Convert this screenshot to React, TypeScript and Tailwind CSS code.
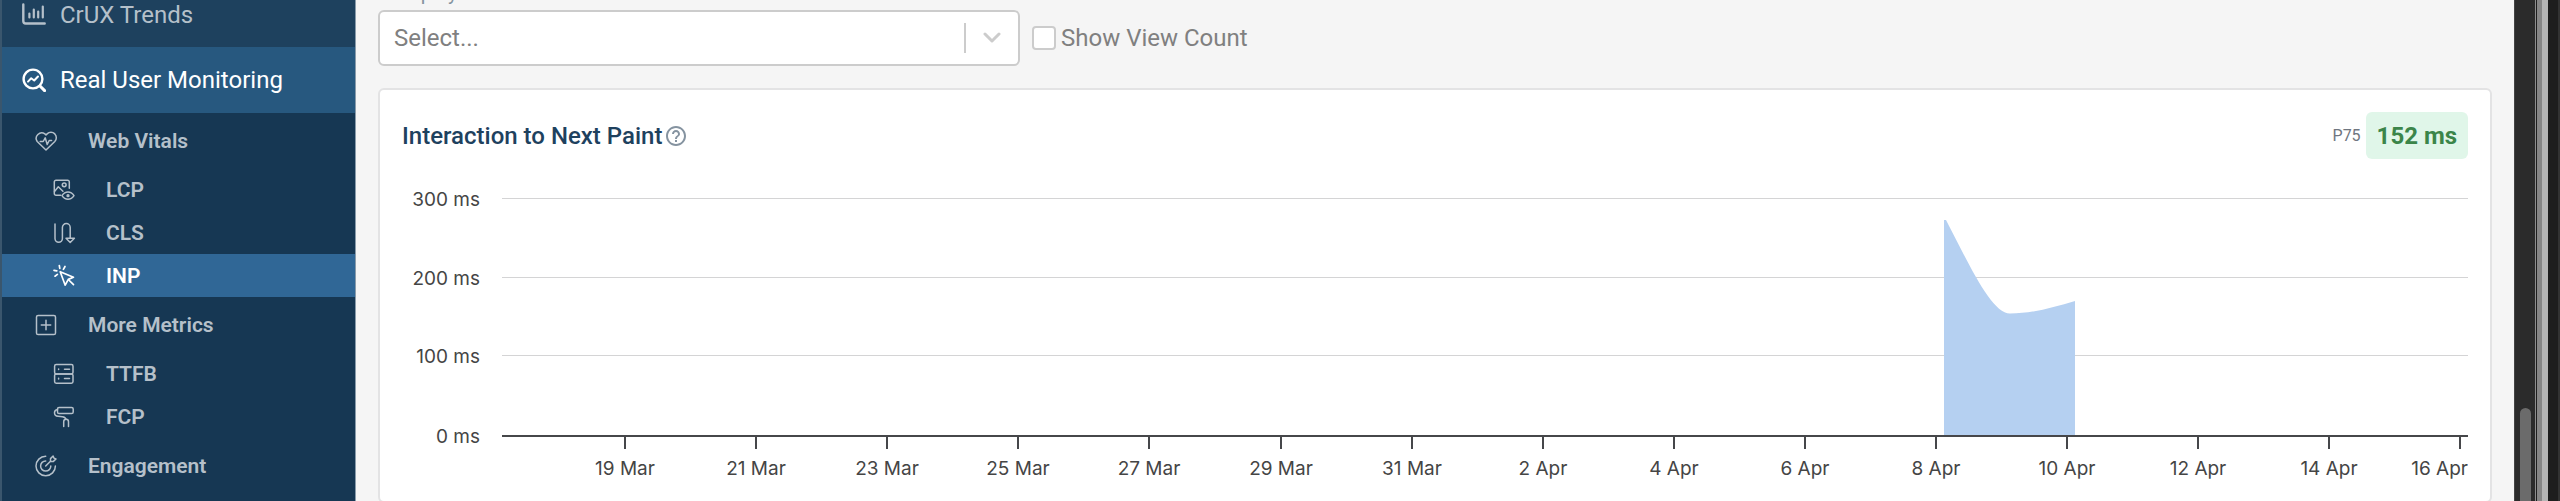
import { ReactNode } from "react";

interface IIconProps {
    children: ReactNode
    width?: number
}

const Icon = ({ children, width = 1.5 }: IIconProps) => (
    <svg
        className="h-6 w-6 shrink-0"
        viewBox="0 0 24 24"
        fill="none"
        stroke="currentColor"
        strokeWidth={width}
        strokeLinecap="round"
        strokeLinejoin="round"
        aria-hidden="true"
    >
        {children}
    </svg>
)

const TrendsIcon = () => (
    <Icon width={2.4}>
        <path d="M1.3 1.5v16.6a2.4 2.4 0 0 0 2.4 2.4h19" />
        <path d="M7.4 10.5v4M11.8 6.5v8M16.2 8.5v6M20.8 3.5v11" strokeWidth="2.2" />
    </Icon>
)

const MonitoringIcon = () => (
    <Icon width={2.4}>
        <circle cx="11" cy="11" r="9.4" />
        <path d="M18 18l4.6 4.6" strokeWidth="3" />
        <path d="M6 13.6l3.2-3.3 3 2.2 3.8-4" strokeWidth="2" />
    </Icon>
)

const HeartIcon = () => (
    <Icon>
        <path d="M20.8 4.9a5.5 5.5 0 0 0-7.7 0L12 6l-1.1-1.1a5.5 5.5 0 0 0-7.7 7.6L12 21l8.8-8.5a5.5 5.5 0 0 0 0-7.6z" />
        <path d="M6.2 12.5h3l2-3.7 2 6.7 2-4h2.4" />
    </Icon>
)

const ImageEyeIcon = () => (
    <Icon>
        <path d="M8.7 17.3H4a1.7 1.7 0 0 1-1.7-1.7V4A1.7 1.7 0 0 1 4 2.3h11.6A1.7 1.7 0 0 1 17.3 4v6.3" />
        <circle cx="12.2" cy="6.8" r="1.9" />
        <path d="M2.5 13.4l3.8-4.6 4.6 4.4" />
        <path d="M10 17.7c1.6-2.4 3.6-3.6 6-3.6s4.4 1.2 6 3.6c-1.6 2.4-3.6 3.6-6 3.6s-4.4-1.2-6-3.6z" />
        <circle cx="16" cy="17.7" r="0.9" />
    </Icon>
)

const ShiftIcon = () => (
    <Icon>
        <path d="M3 3v14.5a3.6 3.6 0 0 0 7.4 0V6.5a3.9 3.9 0 0 1 7.8 0V17" />
        <path d="M14 17.3h8.4l-4.2 4.2z" />
    </Icon>
)

const ClickIcon = () => (
    <Icon width={1.7}>
        <path d="M8.2 7.7l13.3 5.5-5.2 2.2-3.1 5.8z" />
        <path d="M16.8 16l4.7 4.7M7.3 1.5l.5 2.8M13 2.5l-1.6 2.8M2 6.3l2.8.6M3 12.2l2.4-1.8" />
    </Icon>
)

const PlusBoxIcon = () => (
    <Icon>
        <rect x="2.5" y="2.5" width="19" height="19" rx="1.6" />
        <path d="M12 7.3v9.4M7.3 12h9.4" />
    </Icon>
)

const ServerIcon = () => (
    <Icon>
        <rect x="2.6" y="2.6" width="18.4" height="9.3" rx="1.6" />
        <rect x="2.6" y="11.9" width="18.4" height="9.3" rx="1.6" />
        <path d="M6.6 6.9v.7M6.6 16.2v.7M12.5 7.2h5M12.5 16.5h5" />
    </Icon>
)

const RollerIcon = () => (
    <Icon>
        <rect x="5.5" y="2.5" width="15.7" height="6" rx="1.6" />
        <path d="M5.5 4.5C3.5 4.9 2.5 6 2.5 7.7c0 2.2 1.3 3.4 3.6 3.6l4.3.4c2 .2 3.2 1 3.6 2.6" />
        <path d="M11.7 21.5v-4.8a2.4 2.4 0 0 1 4.8 0v4.8" />
    </Icon>
)

const TargetIcon = () => (
    <Icon>
        <path d="M11.7 2.3a9.7 9.7 0 1 0 9.7 9.7" />
        <path d="M11.7 6.9a5.1 5.1 0 1 0 5.1 5.1" />
        <path d="M11.7 12l5-5M16.5 7.2V4.6l2.6-2.6.8 2.1 2.1.8-2.6 2.5z" />
    </Icon>
)

const ChevronIcon = () => (
    <svg
        className="pointer-events-none absolute right-[19px] h-[12px] w-[18px]"
        viewBox="0 0 18 12"
        fill="none"
        stroke="#cccccc"
        strokeWidth="3"
        strokeLinecap="round"
        strokeLinejoin="round"
        aria-hidden="true"
    >
        <path d="M2 2l7 7 7-7" />
    </svg>
)

interface IMetric {
    label: string
    icon: ReactNode
    active?: boolean
}

interface IGroup {
    label: string
    icon: ReactNode
    metrics: IMetric[]
}

const groups: IGroup[] = [
    {
        label: "Web Vitals",
        icon: <HeartIcon />,
        metrics: [
            { label: "LCP", icon: <ImageEyeIcon /> },
            { label: "CLS", icon: <ShiftIcon /> },
            { label: "INP", icon: <ClickIcon />, active: true },
        ],
    },
    {
        label: "More Metrics",
        icon: <PlusBoxIcon />,
        metrics: [
            { label: "TTFB", icon: <ServerIcon /> },
            { label: "FCP", icon: <RollerIcon /> },
        ],
    },
    { label: "Engagement", icon: <TargetIcon />, metrics: [] },
]

const Sidebar = () => {
    return (
        <nav className="w-[356px] shrink-0 overflow-hidden border-r border-l-2 border-r-[#8a9cab] border-l-[#3a566d] bg-[#163753] text-[#b5c0ca]">
            <a href="#crux" className="-mt-[18px] flex h-[65px] items-center gap-[14px] bg-[#1e415e] px-5 text-2xl leading-7">
                <TrendsIcon />
                CrUX Trends
            </a>
            <a href="#rum" className="flex h-[66px] items-center gap-[14px] bg-[#27587f] px-5 text-2xl leading-7 text-white">
                <MonitoringIcon />
                Real User Monitoring
            </a>
            {
                groups.map((group) => (
                    <div key={group.label}>
                        <a href="#group" className="flex h-[55px] items-center gap-[30px] pl-8 text-[21px] leading-7 font-semibold">
                            {group.icon}
                            {group.label}
                        </a>
                        {
                            group.metrics.map((metric) => (
                                <a
                                    key={metric.label}
                                    href="#metric"
                                    className={
                                        metric.active
                                            ? "flex h-[43px] items-center gap-[30px] bg-[#306796] pl-[50px] text-[21px] leading-7 font-semibold text-white"
                                            : "flex h-[43px] items-center gap-[30px] pl-[50px] text-[21px] leading-7 font-semibold"
                                    }
                                >
                                    {metric.icon}
                                    {metric.label}
                                </a>
                            ))
                        }
                    </div>
                ))
            }
        </nav>
    )
}

const yTicks = [
    { label: "300 ms", y: 39 },
    { label: "200 ms", y: 118 },
    { label: "100 ms", y: 196 },
]

const xTicks = [
    "19 Mar", "21 Mar", "23 Mar", "25 Mar", "27 Mar", "29 Mar", "31 Mar",
    "2 Apr", "4 Apr", "6 Apr", "8 Apr", "10 Apr", "12 Apr", "14 Apr", "16 Apr",
]

const Chart = () => {
    return (
        <svg
            className="block w-full font-['Inter',sans-serif] text-[19px]"
            viewBox="0 0 2066 320"
            role="img"
            aria-label="Interaction to Next Paint over time"
        >
            {
                yTicks.map((tick) => (
                    <g key={tick.label}>
                        <path d={`M100 ${tick.y}.5H2066`} stroke="#d4d4d5" />
                        <text x="78" y={tick.y + 8} textAnchor="end" fill="#454545">{tick.label}</text>
                    </g>
                ))
            }
            <text x="78" y="284" textAnchor="end" fill="#454545">0 ms</text>
            <path d="M1542 277V61h2c22 42 45 93.5 64 93.5 22 0 43-6 65-12.5V277z" fill="#b5d0f1" />
            <path d="M100 277H2066" stroke="#46474a" strokeWidth="2" />
            {
                xTicks.map((label, index) => {
                    const x = Math.round(223 + index * 131.1)
                    const last = index === xTicks.length - 1
                    return (
                        <g key={label}>
                            <path d={`M${x} 276V290`} stroke="#46474a" strokeWidth="2" />
                            <text x={last ? 2066 : x} y="316" textAnchor={last ? "end" : "middle"} fill="#454545">
                                {label}
                            </text>
                        </g>
                    )
                })
            }
        </svg>
    )
}

const Filters = () => {
    return (
        <div className="-mt-[19px]">
            <label htmlFor="group-by" className="block h-[29px] text-xl leading-6 text-[#8593a0]">Group by</label>
            <div className="flex items-center gap-3">
                <div className="relative flex h-14 w-[642px] items-center">
                    <select
                        id="group-by"
                        className="h-full w-full appearance-none rounded-md border-2 border-[#cccccc] bg-white px-[14px] text-2xl text-[#808080]"
                    >
                        <option>Select...</option>
                    </select>
                    <span className="pointer-events-none absolute right-[54px] h-[30px] w-[2px] bg-[#cccccc]" />
                    <ChevronIcon />
                </div>
                <label className="flex items-center gap-[5px] text-2xl text-[#808080]">
                    <input type="checkbox" className="h-6 w-6 appearance-none rounded border-2 border-[#cccccc] bg-white" />
                    Show View Count
                </label>
            </div>
        </div>
    )
}

const MetricCard = () => {
    return (
        <section className="mt-[22px] rounded-md border-2 border-[#e3e3e4] bg-white p-[22px]">
            <header className="flex h-[47px] items-center justify-between">
                <div className="flex items-center gap-[2px]">
                    <h2 className="text-2xl font-medium text-[#1e415e]">Interaction to Next Paint</h2>
                    <button type="button" aria-label="Help" className="text-[#8593a0]">
                        <svg className="h-6 w-6" viewBox="0 0 24 24" fill="currentColor" aria-hidden="true">
                            <path d="M11 18h2v-2h-2v2zm1-16C6.48 2 2 6.48 2 12s4.48 10 10 10 10-4.48 10-10S17.52 2 12 2zm0 18c-4.41 0-8-3.59-8-8s3.59-8 8-8 8 3.59 8 8-3.59 8-8 8zm0-14c-2.21 0-4 1.79-4 4h2c0-1.1.9-2 2-2s2 .9 2 2c0 2-3 1.75-3 5h2c0-2.25 3-2.5 3-5 0-2.21-1.79-4-4-4z" />
                        </svg>
                    </button>
                </div>
                <div className="flex items-center gap-[5px]">
                    <span className="text-base text-[#6f7680]">P75</span>
                    <span className="flex h-[47px] items-center rounded-md bg-[#e0f6e9] px-[11px] text-2xl font-bold text-[#3b8549]">152 ms</span>
                </div>
            </header>
            <Chart />
        </section>
    )
}

const WindowEdge = () => {
    return (
        <div className="flex w-[46px] shrink-0">
            <div className="flex w-[21px] flex-col items-center border-l border-[#444444] bg-[#2b2b2b] pt-[408px]">
                <div className="w-[11px] grow rounded-t-full bg-[#6b6b6b]" />
            </div>
            <div className="w-px bg-[#8c8c8c]" />
            <div className="w-px bg-[#1e1e1e]" />
            <div className="w-[5px] bg-[#868686]" />
            <div className="w-[6px] bg-[#b5b5b5]" />
            <div className="w-[10px] bg-[#1e1e1e]" />
            <div className="w-[2px] bg-[#333333]" />
        </div>
    )
}

const App = () => {
    return (
        <div className="flex h-screen overflow-hidden bg-[#f5f5f5] font-['Roboto',sans-serif]">
            <Sidebar />
            <main className="min-w-0 grow overflow-hidden px-[22px]">
                <Filters />
                <MetricCard />
            </main>
            <WindowEdge />
        </div>
    )
}

export default App
